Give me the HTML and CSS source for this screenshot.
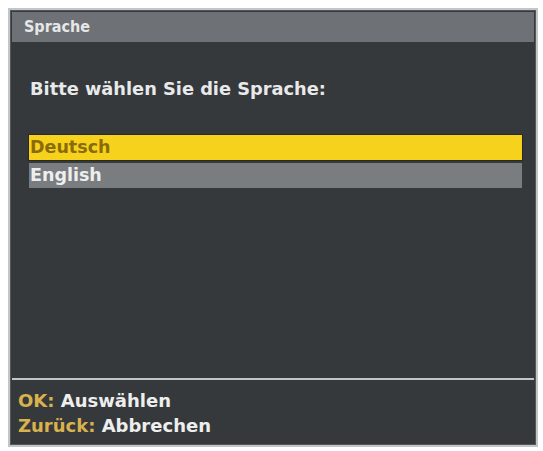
FILE: index.html
```html
<!DOCTYPE html>
<html lang="de">
<head>
<meta charset="utf-8">
<link rel="stylesheet" href="styles.css">
</head>
<body>
<div class="frame">
  <div class="title">Sprache</div>
  <div class="body">
    <p class="prompt">Bitte wählen Sie die Sprache:</p>
    <ul class="list">
      <li class="item selected">Deutsch</li>
      <li class="item">English</li>
    </ul>
  </div>
  <div class="footer">
    <div class="hint"><span class="key">OK:</span> Auswählen</div>
    <div class="hint"><span class="key">Zurück:</span> Abbrechen</div>
  </div>
</div>
</body>
</html>
```
FILE: styles.css
```css
html, body {
  margin: 0;
  padding: 0;
  background: #ffffff;
}
body {
  padding: 8px 0 0 8px;
  font-family: "DejaVu Sans", "Liberation Sans", sans-serif;
  font-weight: bold;
}
.frame {
  width: 530px;
  height: 439px;
  border: 2px solid #c3c5c7;
  background: #36393c;
  padding: 2px;
  box-sizing: border-box;
  display: flex;
  flex-direction: column;
  box-shadow: inset 0 0 0 1px #55595c;
}
.title {
  height: 30px;
  background: #6e7276;
  color: #e6e7e8;
  font-family: "DejaVu Sans Condensed", "DejaVu Sans", sans-serif;
  font-stretch: condensed;
  font-size: 16px;
  font-weight: bold;
  line-height: 30px;
  padding-left: 12px;
  flex: none;
}
.body {
  flex: 1;
  padding: 0 12px 0 17px;
}
.prompt {
  margin: 35px 0 0 1px;
  color: #e8e9ea;
  font-size: 17.8px;
  line-height: 24px;
}
.list {
  list-style: none;
  margin: 34px 0 0 0;
  padding: 0;
}
.item {
  height: 25px;
  line-height: 25px;
  font-size: 17.5px;
  color: #eeeeee;
  background: #7a7d80;
  margin-bottom: 3px;
  padding-left: 1px;
}
.item.selected {
  background: #f6d21c;
  color: #8a6b0a;
  box-shadow: 0 0 0 1px #2a2a20;
}
.footer {
  flex: none;
  height: 65px;
  border-top: 2px solid #c3c5c7;
  padding: 8px 0 0 6px;
  box-sizing: border-box;
}
.hint {
  color: #eeeeee;
  font-size: 18px;
  line-height: 25px;
}
.key {
  color: #d9b24e;
}
```
